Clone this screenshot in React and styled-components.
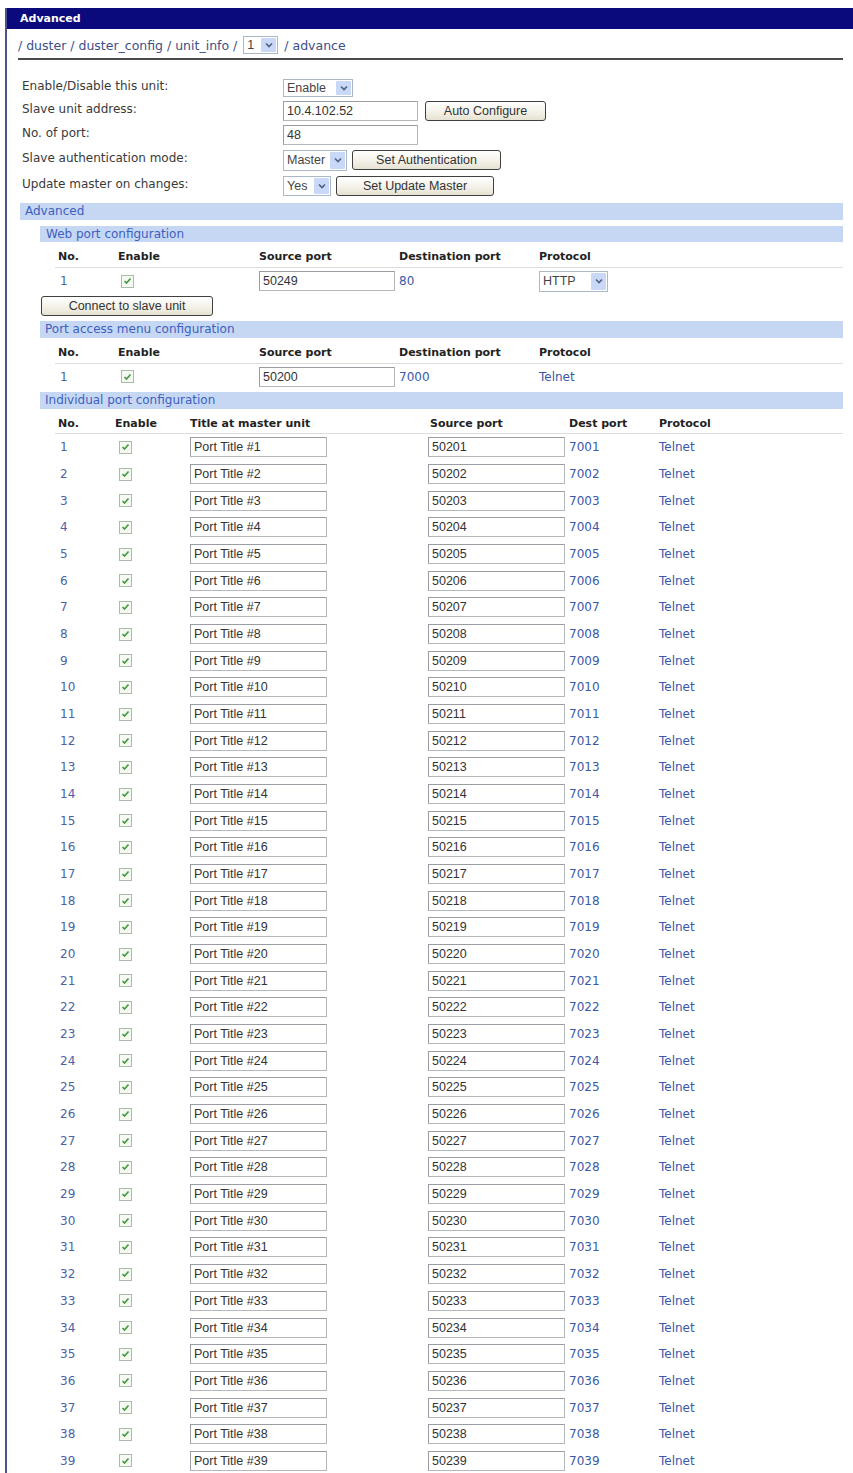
import React from 'react';
import styled, { createGlobalStyle } from 'styled-components';

const GlobalStyle = createGlobalStyle`
  html, body {
    margin: 0;
    padding: 0;
    background: #fff;
  }
  body {
    font-family: "DejaVu Sans", Verdana, sans-serif;
    font-size: 12px;
    color: #3a3a3a;
  }
`;

const Frame = styled.div`
  margin: 8px 0 0 5px;
  border-left: 2px solid #50508c;
  min-height: 1465px;
`;

const TitleBar = styled.div`
  height: 21px;
  line-height: 21px;
  background: #0a0a7c;
  color: #fff;
  font-weight: bold;
  font-size: 11px;
  padding-left: 13px;
`;

const Body = styled.div`
  padding: 0 10px 0 13px;
`;

const Crumbs = styled.div`
  display: flex;
  align-items: center;
  gap: 6px;
  height: 18px;
  padding: 7px 0 4px;
  margin-left: -2px;
  border-bottom: 2px solid #4a4a4a;
  color: #3c4f88;
  font-size: 12.5px;
`;

const Form = styled.div`
  display: grid;
  grid-template-columns: 261px 1fr;
  margin-top: 17px;
  padding-left: 2px;
`;

const FormLabel = styled.div`
  display: flex;
  align-items: center;
  box-sizing: border-box;
  height: ${p => p.$h}px;
  padding-bottom: 5px;
`;

const FormControls = styled.div`
  display: flex;
  align-items: center;
  gap: ${p => p.$gap || 5}px;
  height: ${p => p.$h}px;
`;

const SelectBox = styled.div`
  display: inline-flex;
  align-items: stretch;
  box-sizing: border-box;
  width: ${p => p.$w}px;
  height: ${p => p.$h || 18}px;
  border: 1px solid #aab8c8;
  background: #fff;
  font-family: "Liberation Sans", Arial, sans-serif;
  font-size: 12.5px;
  color: #444;
`;

const SelectText = styled.span`
  flex: 1;
  display: flex;
  align-items: center;
  padding-left: 3px;
`;

const SelectArrow = styled.span`
  width: 15px;
  margin: 1px;
  background: #c8d8f6;
  border-radius: 1px;
  display: flex;
  align-items: center;
  justify-content: center;
`;

const Input = styled.input`
  box-sizing: border-box;
  width: ${p => p.$w}px;
  height: 20px;
  margin: 0;
  padding: 0 3px;
  border: 1px solid #b4b8bc;
  border-top-color: #9a9ea4;
  border-left-color: #9a9ea4;
  font-family: "Liberation Sans", Arial, sans-serif;
  font-size: 12.5px;
  color: #333;
  background: #fff;
  outline: none;
`;

const Btn = styled.button`
  box-sizing: border-box;
  width: ${p => p.$w}px;
  height: 20px;
  margin: ${p => p.$m || 0};
  padding: 0;
  border: 1px solid #404040;
  border-radius: 3px;
  background: linear-gradient(#ffffff, #f2f0e6 60%, #e6e2d2);
  font-family: "Liberation Sans", Arial, sans-serif;
  font-size: 12.5px;
  color: #333;
`;

const SectionBar = styled.div`
  height: ${p => p.$h || 17}px;
  line-height: ${p => p.$h || 17}px;
  margin: ${p => p.$m || 0};
  padding-left: ${p => p.$pad || 5}px;
  background: #c6d7f4;
  color: #3d5fc0;
`;

const Indent = styled.div`
  margin-left: 20px;
`;

const Row = styled.div`
  display: grid;
  grid-template-columns: ${p => p.$cols};
  align-items: center;
  height: ${p => p.$h}px;
  margin-left: 15px;
  padding-left: 3px;
  box-sizing: border-box;
  ${p => p.$head && `
    padding-top: 4px;
    border-bottom: 1px solid #dddddd;
    font-weight: bold;
    font-size: 11px;
    color: #222;
  `}
`;

const Num = styled.span`
  color: #4b63a6;
  padding-left: 2px;
`;

const Link = styled.span`
  color: #3a59a8;
`;

const Check = styled.span`
  display: inline-flex;
  align-items: center;
  justify-content: center;
  box-sizing: border-box;
  width: 13px;
  height: 13px;
  margin-left: ${p => p.$off || 3}px;
  border: 1px solid #a9bca9;
  background: #f5f9f1;
`;

const Select = ({ w, h, children }) => (
  <SelectBox $w={w} $h={h}>
    <SelectText>{children}</SelectText>
    <SelectArrow>
      <svg width="8" height="6" viewBox="0 0 8 6">
        <path d="M1 1.5 L4 4.5 L7 1.5" fill="none" stroke="#4d6189" strokeWidth="1.6" />
      </svg>
    </SelectArrow>
  </SelectBox>
);

const Checkbox = ({ off }) => (
  <Check $off={off}>
    <svg width="9" height="8" viewBox="0 0 9 8">
      <path d="M1.5 4 L3.5 6 L7.5 1.5" fill="none" stroke="#3f9a3f" strokeWidth="1.6" />
    </svg>
  </Check>
);

const WEB_COLS = '60px 141px 140px 140px 1fr';
const PORT_COLS = '57px 75px 238px 141px 90px 1fr';

const ports = Array.from({ length: 39 }, (_, i) => i + 1);

export default function App() {
  return (
    <>
      <GlobalStyle />
      <Frame>
        <TitleBar>Advanced</TitleBar>
        <Body>
          <Crumbs>
            <span>/ duster / duster_config / unit_info /</span>
            <Select w={35}>1</Select>
            <span>/ advance</span>
          </Crumbs>

          <Form>
            <FormLabel $h={22}>Enable/Disable this unit:</FormLabel>
            <FormControls $h={22}>
              <Select w={70}>Enable</Select>
            </FormControls>

            <FormLabel $h={24}>Slave unit address:</FormLabel>
            <FormControls $h={24} $gap={7}>
              <Input $w={135} defaultValue="10.4.102.52" />
              <Btn $w={121}>Auto Configure</Btn>
            </FormControls>

            <FormLabel $h={24}>No. of port:</FormLabel>
            <FormControls $h={24}>
              <Input $w={135} defaultValue="48" />
            </FormControls>

            <FormLabel $h={26}>Slave authentication mode:</FormLabel>
            <FormControls $h={26}>
              <Select w={64} h={21}>Master</Select>
              <Btn $w={149}>Set Authentication</Btn>
            </FormControls>

            <FormLabel $h={26}>Update master on changes:</FormLabel>
            <FormControls $h={26}>
              <Select w={48} h={20}>Yes</Select>
              <Btn $w={158}>Set Update Master</Btn>
            </FormControls>
          </Form>

          <SectionBar $m="4px 0 6px">Advanced</SectionBar>

          <Indent>
            <SectionBar $h={16} $pad={6}>Web port configuration</SectionBar>
            <Row $head $cols={WEB_COLS} $h={26}>
              <span>No.</span>
              <span>Enable</span>
              <span>Source port</span>
              <span>Destination port</span>
              <span>Protocol</span>
            </Row>
            <Row $cols={WEB_COLS} $h={26}>
              <Num>1</Num>
              <Checkbox off={3} />
              <Input $w={136} defaultValue="50249" />
              <Link>80</Link>
              <Select w={69} h={21}>HTTP</Select>
            </Row>
            <Btn $w={172} $m="2px 0 0 1px">Connect to slave unit</Btn>

            <SectionBar $m="5px 0 0" $pad={5}>Port access menu configuration</SectionBar>
            <Row $head $cols={WEB_COLS} $h={26}>
              <span>No.</span>
              <span>Enable</span>
              <span>Source port</span>
              <span>Destination port</span>
              <span>Protocol</span>
            </Row>
            <Row $cols={WEB_COLS} $h={25}>
              <Num>1</Num>
              <Checkbox off={3} />
              <Input $w={136} defaultValue="50200" />
              <Link>7000</Link>
              <Link>Telnet</Link>
            </Row>

            <SectionBar $m="3px 0 0" $pad={5}>Individual port configuration</SectionBar>
            <Row $head $cols={PORT_COLS} $h={25}>
              <span>No.</span>
              <span>Enable</span>
              <span>Title at master unit</span>
              <span style={{ paddingLeft: 2 }}>Source port</span>
              <span>Dest port</span>
              <span>Protocol</span>
            </Row>
            {ports.map(n => (
              <Row key={n} $cols={PORT_COLS} $h={26.68}>
                <Num>{n}</Num>
                <Checkbox off={4} />
                <Input $w={137} defaultValue={`Port Title #${n}`} />
                <Input $w={137} defaultValue={String(50200 + n)} />
                <Link>{7000 + n}</Link>
                <Link>Telnet</Link>
              </Row>
            ))}
          </Indent>
        </Body>
      </Frame>
    </>
  );
}
